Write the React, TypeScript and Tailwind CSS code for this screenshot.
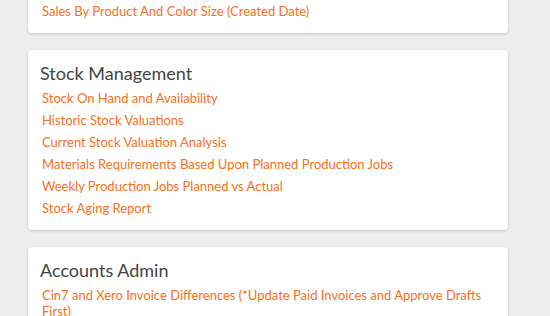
import React from 'react';

const sections = [
  {
    title: '',
    links: ['Sales By Product And Color Size (Created Date)'],
  },
  {
    title: 'Stock Management',
    links: [
      'Stock On Hand and Availability',
      'Historic Stock Valuations',
      'Current Stock Valuation Analysis',
      'Materials Requirements Based Upon Planned Production Jobs',
      'Weekly Production Jobs Planned vs Actual',
      'Stock Aging Report',
    ],
  },
  {
    title: 'Accounts Admin',
    links: ['Cin7 and Xero Invoice Differences (*Update Paid Invoices and Approve Drafts First)'],
  },
];

function ReportCard({ title, links }: { title: string; links: string[] }) {
  return (
    <div className="bg-white rounded-[4px] shadow-[0_1px_3px_rgba(0,0,0,0.18)] px-[12px] pt-[10px] pb-[11px]">
      {title && <h2 className="text-[18px] leading-[26px] text-[#444444] mb-px">{title}</h2>}
      <ul>
        {links.map((l) => (
          <li key={l} className="pl-[2px] py-[3px]">
            <a href="#" className="text-[13px] leading-[16px] text-[#f57021] block">
              {l}
            </a>
          </li>
        ))}
      </ul>
    </div>
  );
}

export default function App() {
  return (
    <div
      className="h-[316px] w-[550px] overflow-hidden bg-[#eeeeee]"
      style={{ fontFamily: 'Lato, "Open Sans", sans-serif' }}
    >
      <div className="w-[480px] ml-[28px] -mt-[10px] flex flex-col gap-[17px]">
        {sections.map((s, i) => (
          <ReportCard key={i} title={s.title} links={s.links} />
        ))}
      </div>
    </div>
  );
}
